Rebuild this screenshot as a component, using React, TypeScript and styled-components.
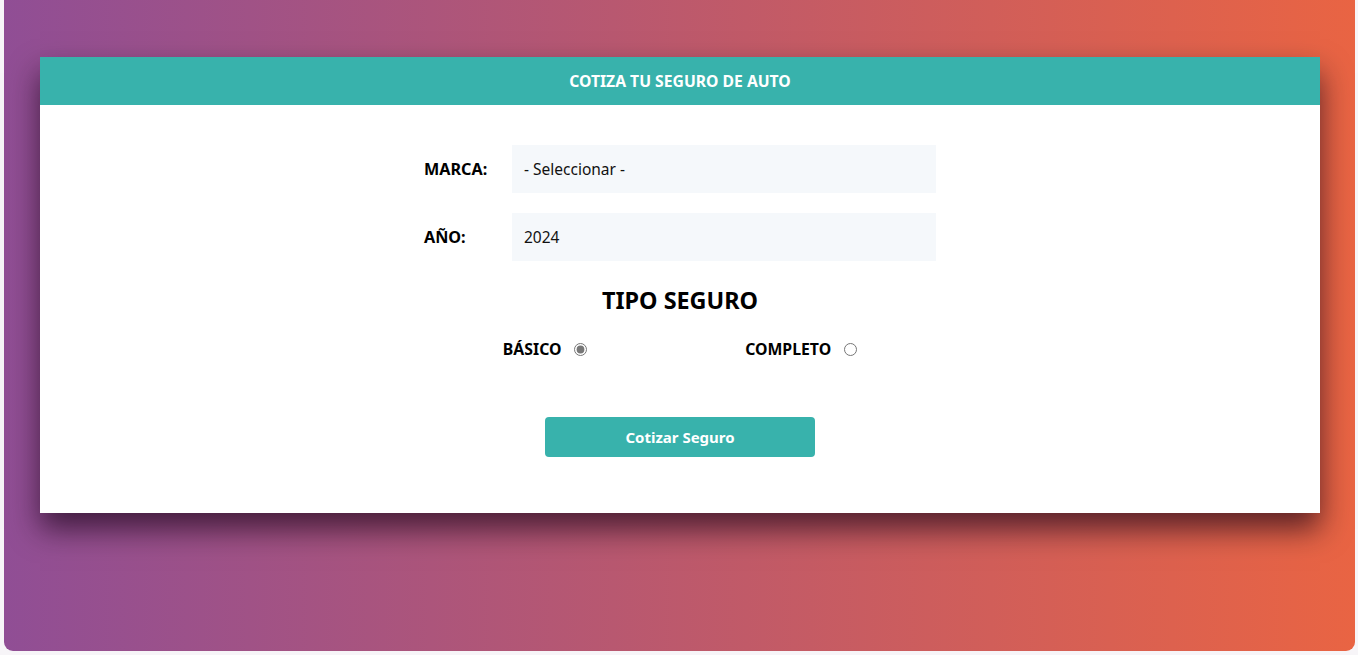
import React, { useState } from "react";
import styled, { createGlobalStyle } from "styled-components";

const Global = createGlobalStyle`
  html, body { margin: 0; padding: 0; background: #f7f5f8; }
  body { font-family: "Noto Sans", "Open Sans", sans-serif; }
  * { box-sizing: border-box; }
`;

const Page = styled.div`
  margin: 0 3px 0 4px;
  height: 651px;
  border-radius: 0 0 9px 9px;
  background: linear-gradient(to right, #904e95, #e96443);
  padding: 57px 35px 0 36px;
`;

const Card = styled.div`
  background: #fff;
  box-shadow: 0 16px 28px rgba(20, 0, 20, 0.65);
`;

const Header = styled.header`
  height: 48px;
  background: #38b2ac;
  color: #fff;
  display: flex;
  align-items: center;
  justify-content: center;
  font-size: 15.7px;
  font-weight: 700;
`;

const Form = styled.form`
  width: 512px;
  margin: 0 auto;
  padding: 40px 0 56px;
  display: flex;
  flex-direction: column;
`;

const Field = styled.div`
  display: flex;
  align-items: center;
  margin-bottom: 20px;
`;

const Label = styled.label`
  flex: 0 0 88px;
  font-weight: 700;
  font-size: 16.2px;
  color: #000;
`;

const Control = styled.div`
  flex: 1;
  height: 48px;
  background: #f5f8fb;
  display: flex;
  align-items: center;
  padding: 0 12px;
  font-size: 15.5px;
  color: #111;
`;

const Title = styled.h2`
  margin: 0;
  text-align: center;
  font-size: 23.4px;
  font-weight: 700;
  color: #000;
  line-height: 38px;
`;

const Options = styled.div`
  display: flex;
  justify-content: space-around;
  margin-top: 18px;
  height: 24px;
  align-items: center;
`;

const Option = styled.label`
  display: flex;
  align-items: center;
  font-weight: 700;
  font-size: 15.8px;
  color: #000;
`;

const Radio = styled.input`
  margin: 0 0 0 13px;
  width: 13px;
  height: 13px;
  accent-color: #777;
`;

const Button = styled.button`
  margin: 56px auto 0;
  width: 270px;
  height: 40px;
  border: none;
  border-radius: 4px;
  background: #38b2ac;
  color: #fff;
  font-family: inherit;
  font-weight: 700;
  font-size: 15px;
`;

export default function App() {
  const [plan, setPlan] = useState("basico");
  return (
    <>
      <Global />
      <Page>
        <Card>
          <Header>COTIZA TU SEGURO DE AUTO</Header>
          <Form onSubmit={(e) => e.preventDefault()}>
            <Field>
              <Label>MARCA:</Label>
              <Control>- Seleccionar -</Control>
            </Field>
            <Field>
              <Label>AÑO:</Label>
              <Control>2024</Control>
            </Field>
            <Title>TIPO SEGURO</Title>
            <Options>
              <Option>
                BÁSICO
                <Radio type="radio" name="plan" checked={plan === "basico"} onChange={() => setPlan("basico")} />
              </Option>
              <Option>
                COMPLETO
                <Radio type="radio" name="plan" checked={plan === "completo"} onChange={() => setPlan("completo")} />
              </Option>
            </Options>
            <Button type="submit">Cotizar Seguro</Button>
          </Form>
        </Card>
      </Page>
    </>
  );
}
